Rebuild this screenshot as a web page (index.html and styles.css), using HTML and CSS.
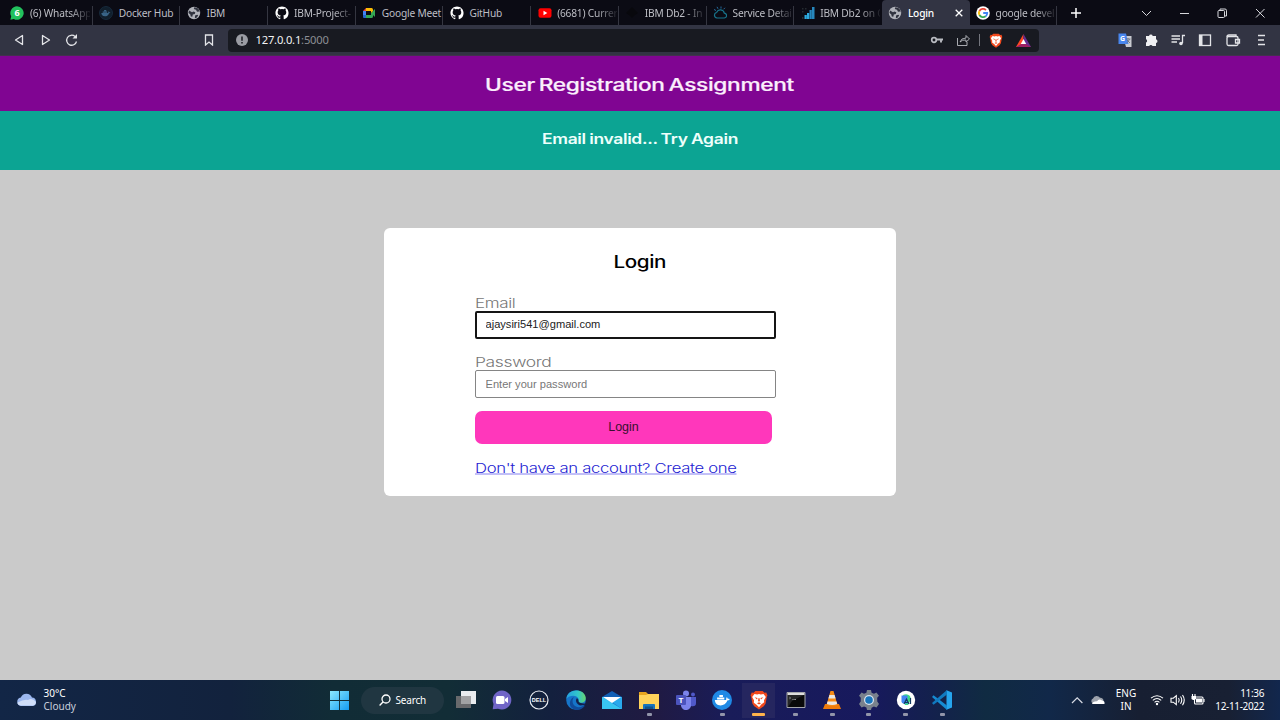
FILE: index.html
```html
<!DOCTYPE html>
<html lang="en">
<head>
<meta charset="utf-8">
<title>Login</title>
<link rel="stylesheet" href="styles.css">
</head>
<body>
<svg class="defs" aria-hidden="true">
  <defs>
    <symbol id="globe" viewBox="0 0 14 14"><circle cx="7" cy="7" r="6.2" fill="#b1b3ba"/><path d="M2 4.5l3 1.7 1.5-.7 1.8.8-.5 1.8-2 .4-.5 2.2-1.500-.3-.6-2.200L1.400 7zM7.300 1.200l-.5 1.700 2.200.8 1 2.100 2.300-.4.5 1.200c0-3-2-5.300-5.500-5.400zM8 9.500l2.200-.8 1 .6-1.300 2.300-2 .6z" fill="#30333f"/></symbol>
    <symbol id="github" viewBox="0 0 16 16"><path fill="#fff" d="M8 .5C3.800.5.5 3.800.5 8c0 3.300 2.100 6.100 5 7.100.4.1.6-.2.6-.4v-1.500c-2 .5-2.600-.5-2.800-1-.2-.4-.5-.9-.9-1.200-.3-.1-.7-.5 0-.5.6 0 1.100.6 1.300.8.7 1.200 1.900.9 2.400.7.1-.5.3-.9.5-1.100-1.800-.2-3.600-.9-3.600-3.800 0-.8.3-1.500.8-2-.1-.2-.4-1 .1-2.100 0 0 .7-.2 2.100.8a7.400 7.400 0 014 0c1.400-1 2.100-.8 2.100-.8.4 1.100.1 1.900 0 2.100.5.5.8 1.200.8 2 0 2.900-1.800 3.600-3.500 3.800.3.2.5.7.5 1.400v2.400c0 .2.1.5.5.4a7.500 7.500 0 005.100-7.100C15.500 3.800 12.200.5 8 .5z"/></symbol>
    <symbol id="whale" viewBox="0 0 20 20"><path d="M1.500 10h12.500c.3-1-.1-2 .6-3 .9.5 1.200 1 1.200 1.700.8-.1 1.600 0 2.200.4-.5 1-1.300 1.300-2.300 1.300C14 14.500 11 16 8 16c-4.500 0-6.300-2.800-6.500-6z"/><path d="M4 7.200h8v2.300H4zM6.500 4.500h4v2.300h-4z"/></symbol>
    <symbol id="brave" viewBox="0 0 20 22"><path d="M6 1h8l2 2 2-.3 1.300 3-.7 2-1.400 7.500-2 2.600L10 21.500l-5.200-3.700-2-2.600L1.400 7.700l-.7-2L2 2.700 4 3z" fill="#f1491d"/><path d="M5 4.500l3 .5L10 4.500l2 .5 3-.5 2.500 3.200-2 3.500.2 2.300-3 2.300L10 19l-2.700-2.700-3-2.300.2-2.800-2-3.500z" fill="#fff"/><path d="M5.200 8l3.200.8-.6 1.600zM14.800 8l-3.200.8.6 1.600zM9.300 9h1.400l.3 3.200-1 .8-1-.8zM7.800 14.500l2.200-1 2.200 1-2.200 1.400z" fill="#f1491d"/></symbol>
  </defs>
</svg>

<div class="tabs">
  <div class="tab"><svg class="fav" viewBox="0 0 14 14"><path d="M7 .3a6.700 6.700 0 11-3.200 12.600L.4 13.700l.8-3.400A6.700 6.700 0 017 .3z" fill="#22c15d"/><text x="7" y="10.200" class="six">6</text></svg><span class="name fade">(6) WhatsApp</span></div>
  <div class="tab"><svg class="fav" viewBox="0 0 14 14"><circle cx="7" cy="7" r="6.500" fill="#111f2c" stroke="#1b3447" stroke-width=".7"/><use href="#whale" x="1.500" y="1.500" width="11" height="11" fill="#386487"/></svg><span class="name">Docker Hub</span></div>
  <div class="tab"><svg class="fav"><use href="#globe"/></svg><span class="name">IBM</span></div>
  <div class="tab"><svg class="fav"><use href="#github"/></svg><span class="name fade">IBM-Project-</span></div>
  <div class="tab"><svg class="fav" viewBox="0 0 14 14"><path d="M4 2h5.500v3H4z" fill="#fbbc05"/><path d="M1 5l3-3v3z" fill="#ea4335"/><path d="M1 5h3v4H1z" fill="#4285f4"/><path d="M1 9h3v3H2a1 1 0 01-1-1z" fill="#2467d1"/><path d="M4 9h5V7l2-2v5.500A1.500 1.500 0 019.500 12H4zM9 7l4-4v8z" fill="#34a853"/><path d="M9.500 2q1.500 0 1.500 1.500V5L9 7V2z" fill="#fbbc05"/></svg><span class="name">Google Meet</span></div>
  <div class="tab"><svg class="fav"><use href="#github"/></svg><span class="name">GitHub</span></div>
  <div class="tab"><svg class="fav" viewBox="0 0 14 14"><rect x=".5" y="2.300" width="13" height="9.500" rx="2" fill="#f00"/><path d="M5.500 4.800v4.400L9.300 7z" fill="#fff"/></svg><span class="name fade">(6681) Currer</span></div>
  <div class="tab"><svg class="fav" viewBox="0 0 14 14"><path d="M7 1l3 3 3 3-3 2-3 3-3-3-3-2 3-3z" fill="#08080d"/></svg><span class="name fade">IBM Db2 - In</span></div>
  <div class="tab"><svg class="fav" viewBox="0 0 14 14" fill="none"><path d="M4 12h7a2.400 2.400 0 00.3-4.800A4 4 0 003.700 6.300 2.900 2.900 0 004 12z" stroke="#18758c" stroke-width="1.200"/><path d="M1 3.500l2 1M4 .8l1 2M8 .5v2M12 1.800l-1.500 1.500" stroke="#266a9c"/></svg><span class="name fade">Service Detai</span></div>
  <div class="tab"><svg class="fav" viewBox="0 0 14 14"><path d="M3.500 9h2.300v4H3.500zM6 7h2.300v6H6z" fill="#2caadf"/><path d="M8.500 4h2.300v9H8.500zM11 1h2.500v12H11z" fill="#2687bd"/><path d="M1 2h1.500v1.500H1zM1 5h1.500v1.500H1zM4 2h1.500v1.500H4zM1 11h1.500v2H1z" fill="#252b30"/></svg><span class="name fade">IBM Db2 on C</span></div>
  <div class="tab active"><svg class="fav"><use href="#globe"/></svg><span class="name">Login</span><svg class="close" viewBox="0 0 8 8"><path d="M.7.7l6.600 6.600M7.300.7L.7 7.300" stroke="#fff" stroke-width="1.300"/></svg></div>
  <div class="tab"><svg class="fav" viewBox="0 0 14 14"><circle cx="7" cy="7" r="6.800" fill="#fff"/><g fill="none" stroke-width="1.800"><path d="M10 4.100A4.200 4.200 0 003.400 5" stroke="#ea4335"/><path d="M3.400 5a4.200 4.200 0 000 4" stroke="#fbbc05"/><path d="M3.400 9a4.200 4.200 0 006.300 1.200" stroke="#34a853"/><path d="M9.700 10.200A4.200 4.200 0 0011.200 7H7.200" stroke="#4285f4"/></g></svg><span class="name fade">google devel</span></div>
  <svg class="plus" viewBox="0 0 10 10"><path d="M5 0v10M0 5h10" stroke="#fff" stroke-width="1.500"/></svg>
  <svg class="winctl" viewBox="0 0 124 12" fill="none" stroke="#d7d8dc"><path d="M1 4l4.500 4.500L10 4M39 6.500h9M115 2l8.500 8.500M123.500 2L115 10.500"/><rect x="77" y="3.500" width="6.500" height="7" rx="1"/><path d="M79 3V2h5q1.500 0 1.500 1.500V9h-2"/></svg>
</div>

<div class="toolbar">
  <svg class="nav" viewBox="0 0 64 14" fill="none" stroke="#e3e4e8" stroke-width="1.300"><path d="M8.500 2.500v9L1.500 7zM28.500 2.500v9L35.500 7z" stroke-linejoin="round"/><path d="M62.500 8.500A5 5 0 1161 3.500"/><path d="M63 1v4.500h-4.500z" fill="#e3e4e8" stroke="none"/></svg>
  <svg class="bookmark" viewBox="0 0 10 12"><path d="M1.500 1h7v10L5 8 1.500 11z" fill="none" stroke="#e3e4e8" stroke-width="1.300"/></svg>
  <div class="address">
    <svg class="info" viewBox="0 0 12 12"><circle cx="6" cy="6" r="6" fill="#9a9ca3"/><path d="M6 2.500v4.300M6 8v1.500" stroke="#181a21" stroke-width="1.500"/></svg>
    <span class="url">127.0.0.1<span class="port">:5000</span></span>
    <svg class="addricons" viewBox="0 0 104 16"><g fill="none" stroke="#b9bbc1"><circle cx="5" cy="8" r="2.300" stroke-width="1.700"/><path d="M7.500 7.500H14M12 8v2.500" stroke-width="1.900"/><path d="M28.500 6v7.500H38V10M31 10q1-4 6-4V3.500L40.500 7 37 10V8q-4-.4-6 2z" stroke-width=".9"/><path d="M50.500 2v12" stroke="#74767e"/></g><use href="#brave" x="60" y="1" width="14" height="15"/><path d="M94.500 2L87 15h7.500z" fill="#ff4724"/><path d="M94.500 2l7.500 13h-7.500z" fill="#662d91"/><path d="M87 15l7.500-4.500L102 15z" fill="#9e1f63"/><path d="M94.500 7l2.700 5h-5.400z" fill="#fff"/></svg>
  </div>
  <svg class="exts" viewBox="0 0 153 16"><path d="M6 4h8.500v11H9z" fill="#c9cbd1"/><path d="M1.500 1.500H9L11.500 12h-10z" fill="#4886ee"/><text x="3" y="9" class="g">G</text><path d="M9 7h4.500M11 6v1M12.500 7q-1 3-3 4M10 8l3 3" stroke="#666b76" fill="none" stroke-width=".8"/><path d="M29 4h3a1.900 1.900 0 013.700 0h3.300v3.300a1.900 1.900 0 010 3.700V14h-3.500a1.800 1.800 0 00-3.300 0H29v-3.500a1.700 1.700 0 000-3.200z" fill="#f0f0f3"/><g fill="none" stroke="#e3e4e8" stroke-width="1.300"><path d="M54.500 4H63M54.500 7H63M54.500 10H60M68 3.500h-2.500V11"/><rect x="82.500" y="3" width="11" height="10.500"/><path d="M84 3v10.500" stroke-width="3"/><rect x="110" y="4.500" width="11" height="9" rx="1.500"/><path d="M110 5q0-2 2-2h7v2M122.500 7.500h-4v3.500h4z"/><path d="M141 3.500h7M141 8h6M141 12.500h7"/></g><circle cx="64" cy="11.500" r="1.800" fill="#e3e4e8"/></svg>
</div>

<main class="page">
  <h1 class="banner purple"><svg class="wide" width="312" height="24"><text x="1" y="18" textLength="309" lengthAdjust="spacingAndGlyphs" class="t-head">User Registration Assignment</text></svg></h1>
  <h2 class="banner teal"><svg class="wide" width="198" height="22"><text x="1" y="16" textLength="196" lengthAdjust="spacingAndGlyphs" class="t-alert">Email invalid... Try Again</text></svg></h2>
  <section class="card">
    <h2 class="card-title"><svg class="wide" width="54" height="22"><text x=".5" y="16.500" textLength="52.500" lengthAdjust="spacingAndGlyphs" class="t-login">Login</text></svg></h2>
    <form class="form">
      <label><svg class="wide" width="80" height="18"><text x="0" y="14" textLength="40.500" lengthAdjust="spacingAndGlyphs" class="t-label">Email</text></svg></label>
      <input class="field focused" type="text" value="ajaysiri541@gmail.com">
      <label class="second"><svg class="wide" width="80" height="18"><text x="0" y="14" textLength="76.500" lengthAdjust="spacingAndGlyphs" class="t-label">Password</text></svg></label>
      <input class="field" type="password" placeholder="Enter your password">
      <button class="submit" type="button">Login</button>
      <a class="create" href="#"><svg class="wide" width="263" height="20"><text x="0" y="13.500" textLength="261.500" lengthAdjust="spacingAndGlyphs" class="t-link">Don't have an account? Create one</text><path class="rule" d="M0 15h261.500"/></svg></a>
    </form>
  </section>
</main>

<footer class="taskbar">
  <div class="weather"><svg class="cloud" viewBox="0 0 22 16"><path d="M5 14a4.300 4.300 0 01-.2-8.500A6 6 0 0116 5.600 4.300 4.300 0 0117 14z" fill="#9bb7ee"/><path d="M5 13.500q-3.500-.5-3.500-3Q8 7 12 8q4-3 8 2-.2 3-3 3.500z" fill="#d0def8"/></svg><div class="stack"><span>30°C</span><span class="dim">Cloudy</span></div></div>
  <div class="apps">
    <svg class="start" viewBox="0 0 20 20"><defs><linearGradient id="win" x2="1" y2="1"><stop stop-color="#8ceaff"/><stop offset="1" stop-color="#149bf3"/></linearGradient></defs><path d="M0 0h9.500v9.500H0zM10.500 0H20v9.500h-9.500zM0 10.500h9.500V20H0zM10.500 10.500H20V20h-9.500z" fill="url(#win)"/></svg>
    <div class="search"><svg class="lens" viewBox="0 0 12 12"><circle cx="7" cy="5" r="4" fill="none" stroke="#fff" stroke-width="1.300"/><path d="M4.200 7.800L.6 11.400" stroke="#fff" stroke-width="1.400"/></svg>Search</div>
    <div class="app"><svg viewBox="0 0 20 20"><path d="M5 1h15v13H5z" fill="#e9ecef"/><path d="M0 6h15v12H0z" fill="#68696c"/><path d="M5 6h10v8H5z" fill="#a1a2a4"/></svg></div>
    <div class="app"><svg viewBox="0 0 20 20"><path d="M10 .5a9.500 9.500 0 11-4 18.200L.7 19.300 1.500 14A9.500 9.500 0 0110 .5z" fill="#7065c7"/><rect x="4" y="6" width="8.500" height="8" rx="1.500" fill="#fff"/><path d="M13 9l3-2v6l-3-2z" fill="#fff"/></svg></div>
    <div class="app"><svg viewBox="0 0 20 20"><circle cx="10" cy="10" r="9" fill="none" stroke="#e7ebf2" stroke-width="1.200"/><text x="10" y="12.200" class="dell">DELL</text></svg></div>
    <div class="app"><svg viewBox="0 0 20 20"><defs><linearGradient id="edge"><stop stop-color="#249ee1"/><stop offset=".6" stop-color="#32c7c9"/><stop offset="1" stop-color="#68d46e"/></linearGradient></defs><circle cx="10" cy="10" r="9.800" fill="#1675c9"/><path d="M.3 9C1-2 19-2 19.800 8c0 4-3 5.500-7 4.500-1.800-.5 0-1.500 0-3C12 5 4 4 .3 9z" fill="url(#edge)"/><path d="M8 7c-4 6 1 13 9 9 1.500-.8 2-.3 1.500.3-2.500 3.500-7 4.300-10.500 3C2 17 3 9 8 7z" fill="#104b9b"/><path d="M11 8c-2 2-1 6 3 7.500l4.500-.5 2-1.500c-6 .5-8.500-1.500-8-3.500z" fill="#13204c"/></svg></div>
    <div class="app"><svg viewBox="0 0 20 20"><path d="M0 7l10-6 10 6z" fill="#1260b5"/><path d="M0 7h20v12H0z" fill="#29a9ec"/><path d="M0 19L10 12l10 7z" fill="#1879cb"/><path d="M0 7l20 12H0z" fill="#38c6f2"/><path d="M1 7h18l-9 6z" fill="#fff"/></svg></div>
    <div class="app"><svg viewBox="0 0 20 20"><path d="M0 2h7l2 2h9v5H0z" fill="#e8a51f"/><path d="M0 5h7l2-1h11v15H0z" fill="#ffd35a"/><path d="M4 19v-4q0-1 1-1h10q1 0 1 1v4z" fill="#1673bd"/><path d="M6 16.500h8V19H6z" fill="#115086"/></svg><i class="dot"></i></div>
    <div class="app"><svg viewBox="0 0 20 20"><circle cx="10" cy="3.500" r="3" fill="#7b83eb"/><circle cx="17" cy="4.500" r="2" fill="#5059c9"/><path d="M5 7h10v7a5 5 0 01-10 2z" fill="#7b83eb"/><path d="M15 7h5v6q0 4-5 3z" fill="#5059c9"/><rect y="5" width="10" height="10" rx="1" fill="#4b53bc"/><text x="5" y="13" class="teams">T</text></svg></div>
    <div class="app"><svg viewBox="0 0 20 20"><circle cx="10" cy="10" r="10" fill="#1f89e5"/><use href="#whale" x="1.500" y="1" width="18" height="18" fill="#fff"/></svg><i class="dot"></i></div>
    <div class="app current"><svg><use href="#brave"/></svg><i class="dot"></i></div>
    <div class="app"><svg viewBox="0 0 20 20"><path d="M1 2.500h18v15H1z" fill="#090909" stroke="#a5a7ac"/><path d="M1.500 3h17v2h-17z" fill="#ddd"/><path d="M3 7l2 1-2 1M6 9.500h4" stroke="#ccc" fill="none" stroke-width=".8"/><path d="M18 5L6 11l-4 6V5z" fill="#37383b" opacity=".6"/></svg><i class="dot"></i></div>
    <div class="app"><svg viewBox="0 0 20 20"><path d="M3 14h14l2 5H1z" fill="#ee7b0b"/><path d="M8.500 1h3l4 14q-5.500 2-11 0z" fill="#f58a15"/><path d="M7.400 5h5.200l1 3.500H6.400zM5.500 11.500h9l.8 2.500q-5 2-10.500 0z" fill="#e9e7e3"/></svg><i class="dot"></i></div>
    <div class="app"><svg viewBox="0 0 20 20"><path d="M8 0h4l.6 2.700 2.400 1 2.400-1.300L20 5.700l-1.800 2 .1 3.700L20 14l-2.500 3.500-2.600-1-2.300 1.200L12 20H8l-.6-2.400-2.300-1.200-2.600 1L0 14l1.700-2.500.1-3.700L0 5.700l2.600-3.300L5 3.700l2.400-1z" fill="#79828d"/><circle cx="10" cy="10" r="5" fill="#d7e4ef"/><circle cx="10" cy="10" r="3.800" fill="#1775bd"/></svg><i class="dot"></i></div>
    <div class="app"><svg viewBox="0 0 20 20"><circle cx="10" cy="10" r="9.200" fill="#fff"/><path d="M7 5q4-2 7 1l1 3-3 6H9z" fill="#3ddc84"/><path d="M5.500 5.500h6v8h-4q-2 0-2-2z" fill="#4285f4"/><path d="M8 14l2.500-5 2.500 5M9 12.500h3M14.500 8v6" stroke="#123b63" stroke-width="1.200" fill="none"/></svg><i class="dot"></i></div>
    <div class="app"><svg viewBox="0 0 20 20"><path d="M14.500.3L20 2.500v15l-5.500 2.200z" fill="#26a5ed"/><path d="M1.500 5.200L15 15.500V20L0 7z" fill="#168bd2"/><path d="M1.500 14.800L15 4.500V0L0 13z" fill="#1179bf"/></svg><i class="dot"></i></div>
  </div>
  <div class="tray">
    <svg class="status" viewBox="0 0 36 14"><path d="M2 10l5.200-5.200 5.200 5.200" fill="none" stroke="#d7dbe4" stroke-width="1.200"/><path d="M23 10.500a2.700 2.700 0 010-5 4 4 0 017-.7 3 3 0 013.500 3z" fill="#9da2ab"/><path d="M22 11q1-3 5-2.800Q29 5 32 7.500q3 .2 2.500 3.500z" fill="#fff"/></svg>
    <div class="stack lang"><span>ENG</span><span>IN</span></div>
    <svg class="net" viewBox="0 0 56 14"><g fill="none" stroke="#fff" stroke-width="1.100"><path d="M1 5.200q6-5 12 0M2.800 7.300q4.200-3.600 8.400 0M4.600 9.300q2.400-2 4.800 0"/><path d="M21 5.200h2.300l3-2.500v9l-3-2.500H21zM28.500 5q1.500 2 0 4.500M30.500 3.500q2.500 3.500 0 7.300M32.500 2q3.500 5 0 10.300"/><rect x="44.500" y="4" width="8.500" height="7" rx="1"/><path d="M54 6v3M42.500 1v3M45 1v3"/></g><circle cx="7" cy="11" r="1.200" fill="#fff"/><path d="M41.500 3H46v3l-1.500 1h-1.500l-1.500-1zM46 5.500h6v4h-6z" fill="#fff"/></svg>
    <div class="stack clock"><span>11:36</span><span>12-11-2022</span></div>
  </div>
</footer>
</body>
</html>
```

FILE: styles.css
```css
* { box-sizing: border-box; }
body {
  margin: 0; width: 1280px; height: 720px; overflow: hidden;
  display: flex; flex-direction: column;
  background: #cacaca; font-family: "Noto Sans", sans-serif;
}
svg { display: block; flex: none; }
.defs { position: absolute; width: 0; height: 0; }

.tabs { height: 25px; flex: none; display: flex; align-items: center; padding-left: 5px; background: #0b0b14; color: #bdbec5; }
.tab { width: 87.700px; height: 25px; flex: none; display: flex; align-items: center; padding-left: 6.500px; gap: 5.500px; font-size: 10.200px; letter-spacing: -.2px; background: linear-gradient(#353641, #353641) right 6px / 1px 19px no-repeat; }
.tab:first-child { padding-left: 5px; gap: 6px; }
.tab:nth-child(10) { background: none; }
.tab.active { background: #323443; color: #fff; border-radius: 4px 4px 0 0; font-weight: 500; }
.fav { width: 14px; height: 14px; }
.name { width: 60px; white-space: nowrap; line-height: 16px; }
.fade { -webkit-mask-image: linear-gradient(90deg, #000 65%, rgba(0,0,0,.1)); mask-image: linear-gradient(90deg, #000 65%, rgba(0,0,0,.1)); }
.active .name { width: 42px; }
.close { width: 8px; height: 8px; }
.six { font: bold 9px "Open Sans", sans-serif; fill: #fff; text-anchor: middle; }
.plus { width: 10px; height: 10px; margin-left: 14px; }
.winctl { width: 124px; height: 12px; margin-left: 60px; }

.toolbar { height: 31px; flex: none; display: flex; align-items: center; background: #323443; border-bottom: 1px solid #43304f; }
.nav { width: 64px; height: 14px; margin-left: 13.500px; }
.bookmark { width: 10px; height: 12px; margin-left: 126.500px; }
.address { width: 811px; height: 23px; margin-left: 14px; display: flex; align-items: center; background: #181a21; border-radius: 4px; }
.info { width: 12px; height: 12px; margin-left: 8px; }
.url { flex: 1; margin-left: 7.500px; color: #f2f2f4; font-size: 11.200px; letter-spacing: -.2px; line-height: 20px; }
.port { color: #8c8e94; }
.addricons { width: 104px; height: 16px; margin-right: 6px; }
.exts { width: 153px; height: 16px; margin-left: 78px; }
.g { font: bold 7px "Open Sans", sans-serif; fill: #fff; }

.page { flex: 1; min-height: 0; }
.banner { margin: 0; display: flex; justify-content: center; }
.purple { height: 55px; padding-top: 17px; background: #800592; }
.teal { height: 59px; padding-top: 17px; background: #0ca493; }
.wide { font-family: Inter, sans-serif; overflow: visible; }
.t-head { font-size: 17px; font-weight: 500; fill: #fbeefc; stroke: #fbeefc; stroke-width: .2px; letter-spacing: -.015em; word-spacing: -.08em; }
.t-alert { font-size: 14.500px; font-weight: 600; fill: #eefffb; letter-spacing: -.02em; word-spacing: -.04em; }
.t-login { font-size: 17px; font-weight: 500; fill: #000; letter-spacing: -.02em; }
.t-label { font-size: 13px; font-weight: 300; fill: #777; letter-spacing: -.02em; }
.t-link { font-size: 13px; font-weight: 300; fill: #251dd2; letter-spacing: -.02em; }
.rule { stroke: #8580f0; stroke-width: 1; }
.card { width: 512px; height: 268px; margin: 58px auto 0; padding-top: 23px; background: #fff; border-radius: 6px; }
.card-title { margin: 0; display: flex; justify-content: center; }
.form { margin: 20.500px 0 0 91px; width: 301px; display: flex; flex-direction: column; align-items: flex-start; }
.form label { height: 17px; }
.form .second { margin-top: 14.500px; height: 17px; }
.field { width: 300.500px; height: 28px; padding: 0 9.500px; border: 1px solid #858585; border-radius: 2px; outline: 0; font: 11.100px "Liberation Sans", Arial, sans-serif; color: #222; background: #fff; }
.field.focused { border: 2px solid #151515; padding: 0 8.500px 1px; }
.field::placeholder { color: #777; }
.submit { width: 297px; height: 33.500px; margin-top: 12.500px; padding: 0; border: 0; border-radius: 7px; background: #ff37bb; color: #38112e; font: 12.500px "Liberation Sans", Arial, sans-serif; }
.create { margin-top: 14.500px; }

.taskbar { height: 40px; flex: none; display: flex; align-items: center; color: #fff; font-size: 10px; background: linear-gradient(90deg, #122646 0, #12223d 18%, #112c36 26%, #122d36 35%, #13203e 43%, #201a42 51%, #191c59 57%, #17195d 68%, #13214c 73%, #102b42 77%, #112849 82%, #171f32 89%, #182033 96%, #12274d 100%); }
.weather { width: 313px; display: flex; align-items: center; padding-left: 16px; gap: 5.500px; }
.cloud { width: 22px; height: 16px; }
.stack { display: flex; flex-direction: column; line-height: 13px; }
.dim { color: #c9d0dc; }
.apps { display: flex; align-items: center; height: 40px; width: 648px; padding-left: 17px; }
.start { width: 19px; height: 19px; }
.search { width: 83px; height: 27px; margin: 0 3.500px 0 12px; flex: none; display: flex; align-items: center; justify-content: center; gap: 4.500px; border-radius: 14px; background: #203641; font-size: 10px; letter-spacing: -.2px; }
.lens { width: 12px; height: 12px; }
.app { width: 36.650px; height: 36px; flex: none; display: flex; align-items: center; justify-content: center; position: relative; }
.app > svg { width: 20px; height: 20px; }
.dot { position: absolute; bottom: 2px; left: calc(50% - 2.500px); width: 5px; height: 3px; border-radius: 1px; background: #9295aa; }
.current { background: linear-gradient(#25265f, #25265f) center / 33px 35px no-repeat; }
.current .dot { width: 13px; left: calc(50% - 6.500px); background: #ffb34b; }
.dell { font: bold 5.500px "Liberation Sans", sans-serif; fill: #fff; text-anchor: middle; }
.teams { font: bold 8px "Liberation Sans", sans-serif; fill: #fff; text-anchor: middle; }
.tray { flex: 1; display: flex; align-items: center; padding: 0 16px 0 109px; }
.status { width: 36px; height: 14px; }
.lang { width: 38px; align-items: center; text-align: center; margin-left: 1px; }
.net { width: 56px; height: 14px; margin-left: 5px; }
.clock { flex: 1; align-items: flex-end; white-space: nowrap; letter-spacing: -.35px; }
```
